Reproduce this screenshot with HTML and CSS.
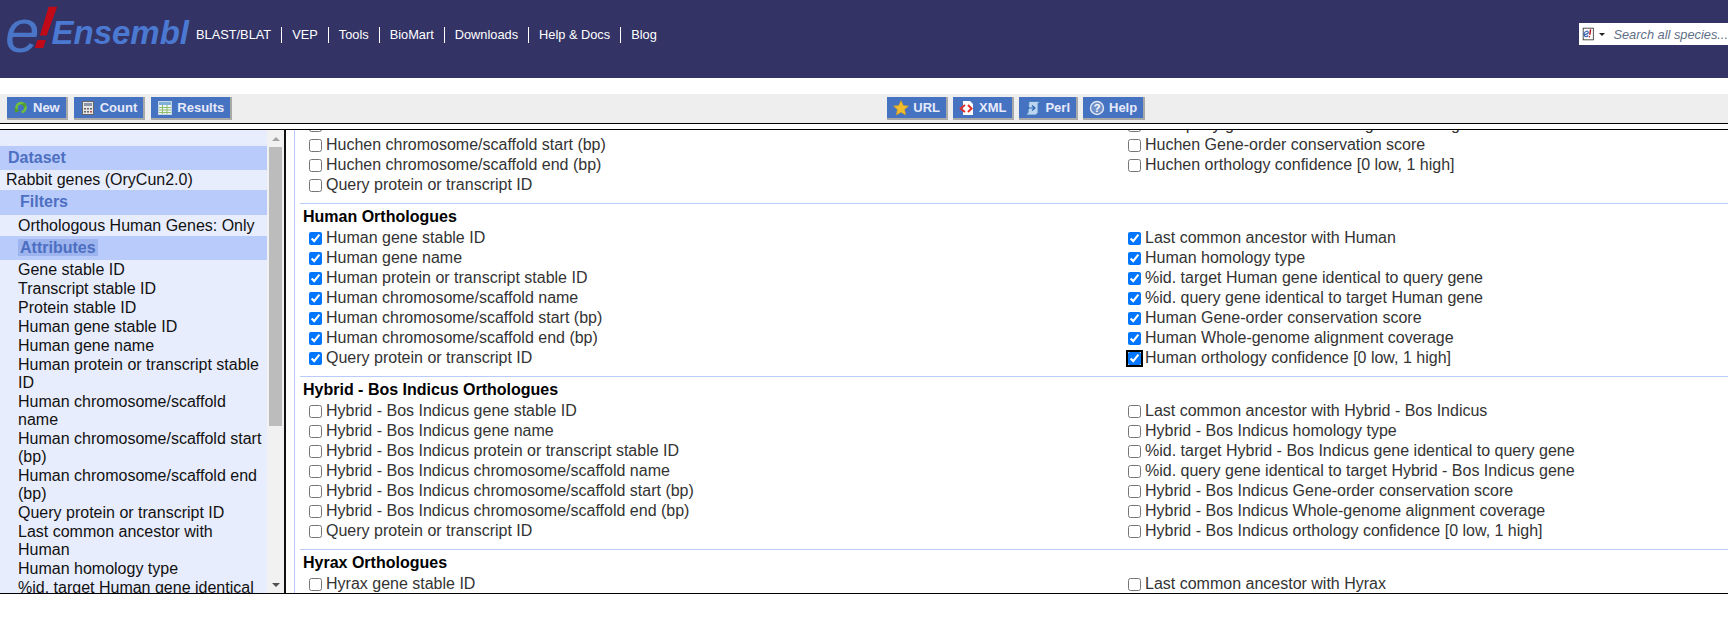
FILE: index.html
```html
<!DOCTYPE html>
<html>
  <head>
    <meta charset="utf-8">
    <title>BioMart - Ensembl</title>
    <link rel="stylesheet" href="styles.css">
  </head>
  <body>
    <header class="masthead">
      <div class="logo">
        <span class="logo-e">e</span><span class="logo-bang">!</span><span class="logo-name">Ensembl</span>
      </div>
      <ul class="nav">
        <li>BLAST/BLAT</li>
        <li>VEP</li>
        <li>Tools</li>
        <li>BioMart</li>
        <li>Downloads</li>
        <li>Help &amp; Docs</li>
        <li>Blog</li>
      </ul>
      <div class="site-search">
        <svg class="search-icon" width="16" height="18" viewBox="0 0 16 18">
          <rect x="1.500" y="1.500" width="13" height="15" fill="#fff" stroke="#222"/>
          <path d="M2 10c1-5 6-6 6-3 0 2-3 2.500-5 3 0 3 3 3 5 1" fill="none" stroke="#3a66b8" stroke-width="1.600"/>
          <path d="M11 3l-1 7" stroke="#b01020" stroke-width="1.800"/>
          <circle cx="9.500" cy="12.500" r="1" fill="#b01020"/>
        </svg>
        <span class="search-caret"></span>
        <span class="search-text">Search all species...</span>
      </div>
    </header>

    <div class="toolbar">
      <div class="tool-group">
        <button class="tool-btn">
          <svg width="16" height="16" viewBox="0 0 16 16">
            <path d="M12 6.500a4.500 4.500 0 1 1-4.500-2.500" fill="none" stroke="#6fbf3c" stroke-width="2.600" transform="rotate(180 8 8)"/>
            <path d="M2 7l4 4.500-5 .5z" fill="#4f9e2a" transform="rotate(-20 4 9)"/>
            <path d="M12 8l-4-4 5-1z" fill="#4f9e2a"/>
          </svg>
          New
        </button>
        <button class="tool-btn">
          <svg width="16" height="16" viewBox="0 0 16 16">
            <rect x="2.500" y="1.500" width="11" height="13" fill="#e6e6e6" stroke="#666"/>
            <rect x="4" y="3" width="8" height="3" fill="#8b97a8"/>
            <path d="M4 8h2v1.500H4zM7 8h2v1.500H7zM10 8h2v1.500h-2zM4 11h2v1.500H4zM7 11h2v1.500H7z" fill="#666"/>
            <path d="M10 11h2v1.500h-2z" fill="#c84a3a"/>
          </svg>
          Count
        </button>
        <button class="tool-btn">
          <svg width="16" height="16" viewBox="0 0 16 16">
            <rect x="1.500" y="1.500" width="13" height="13" fill="#eef4fb" stroke="#c4d4e6"/>
            <rect x="2" y="2" width="12" height="3" fill="#7fb0d8"/>
            <path d="M2 7.500h12M2 10h12M2 12.500h12M5.500 5v9M10 5v9" stroke="#8fbf6a" stroke-width="1"/>
          </svg>
          Results
        </button>
      </div>
      <div class="tool-group tool-group-export">
        <button class="tool-btn">
          <svg width="16" height="16" viewBox="0 0 16 16">
            <path d="M8 .5l2.300 5 5.200.6-3.900 3.500 1.100 5.400L8 12.300 3.300 15l1.100-5.400L.5 6.100l5.200-.6z" fill="#f2bd2c" stroke="#c99a22" stroke-width=".6"/>
          </svg>
          URL
        </button>
        <button class="tool-btn">
          <svg width="16" height="16" viewBox="0 0 16 16">
            <path d="M4 1h7l3 3v11H4z" fill="#fff"/>
            <path d="M6 5L1.500 8.500 6 12" fill="none" stroke="#e0322a" stroke-width="2"/>
            <path d="M9 5l3.500 3.500L9 12" fill="none" stroke="#e0322a" stroke-width="2"/>
          </svg>
          XML
        </button>
        <button class="tool-btn">
          <svg width="16" height="16" viewBox="0 0 16 16">
            <path d="M4 1.500h11l-2 2v9l-2 2.500H1l2-2.500z" fill="#bcd6f2" stroke="#3f78b8" stroke-width=".8"/>
            <path d="M2 8h8M7 5.500L10 8l-3 2.500" fill="none" stroke="#2a66ae" stroke-width="1.200"/>
          </svg>
          Perl
        </button>
        <button class="tool-btn">
          <svg width="16" height="16" viewBox="0 0 16 16">
            <circle cx="8" cy="8" r="6.500" fill="#6f8fc8" stroke="#dfe6f5" stroke-width="1.400"/>
            <text x="8" y="12" text-anchor="middle" class="help-mark">?</text>
          </svg>
          Help
        </button>
      </div>
    </div>

    <div class="panes">
      <aside class="summary">
        <div class="summary-list">
          <h3 class="band band-top">Dataset</h3>
          <div class="summary-dataset">Rabbit genes (OryCun2.0)</div>
          <h3 class="band band-sub band-filters">Filters</h3>
          <div class="summary-item summary-filter">Orthologous Human Genes: Only</div>
          <h3 class="band band-sub"><span class="band-active">Attributes</span></h3>
          <div class="summary-items">
            <div class="summary-item">Gene stable ID</div>
            <div class="summary-item">Transcript stable ID</div>
            <div class="summary-item">Protein stable ID</div>
            <div class="summary-item">Human gene stable ID</div>
            <div class="summary-item">Human gene name</div>
            <div class="summary-item">Human protein or transcript stable ID</div>
            <div class="summary-item">Human chromosome/scaffold name</div>
            <div class="summary-item">Human chromosome/scaffold start (bp)</div>
            <div class="summary-item">Human chromosome/scaffold end (bp)</div>
            <div class="summary-item">Query protein or transcript ID</div>
            <div class="summary-item">Last common ancestor with Human</div>
            <div class="summary-item">Human homology type</div>
            <div class="summary-item">%id. target Human gene identical to query gene</div>
          </div>
        </div>
        <div class="scrollbar">
          <div class="scroll-btn"><span class="arrow-up"></span></div>
          <div class="scroll-thumb"></div>
          <div class="scroll-rest"></div>
          <div class="scroll-btn"><span class="arrow-down"></span></div>
        </div>
      </aside>

      <main class="attributes">
        <section class="attr-section attr-section-first">
          <div class="attr-grid">
            <label class="attr"><input type="checkbox">Huchen chromosome/scaffold name</label>
            <label class="attr"><input type="checkbox">%id. query gene identical to target Huchen gene</label>
            <label class="attr"><input type="checkbox">Huchen chromosome/scaffold start (bp)</label>
            <label class="attr"><input type="checkbox">Huchen Gene-order conservation score</label>
            <label class="attr"><input type="checkbox">Huchen chromosome/scaffold end (bp)</label>
            <label class="attr"><input type="checkbox">Huchen orthology confidence [0 low, 1 high]</label>
            <label class="attr"><input type="checkbox">Query protein or transcript ID</label>
          </div>
        </section>

        <section class="attr-section">
          <h4 class="attr-title">Human Orthologues</h4>
          <div class="attr-grid">
            <label class="attr"><input type="checkbox" checked>Human gene stable ID</label>
            <label class="attr"><input type="checkbox" checked>Last common ancestor with Human</label>
            <label class="attr"><input type="checkbox" checked>Human gene name</label>
            <label class="attr"><input type="checkbox" checked>Human homology type</label>
            <label class="attr"><input type="checkbox" checked>Human protein or transcript stable ID</label>
            <label class="attr"><input type="checkbox" checked>%id. target Human gene identical to query gene</label>
            <label class="attr"><input type="checkbox" checked>Human chromosome/scaffold name</label>
            <label class="attr"><input type="checkbox" checked>%id. query gene identical to target Human gene</label>
            <label class="attr"><input type="checkbox" checked>Human chromosome/scaffold start (bp)</label>
            <label class="attr"><input type="checkbox" checked>Human Gene-order conservation score</label>
            <label class="attr"><input type="checkbox" checked>Human chromosome/scaffold end (bp)</label>
            <label class="attr"><input type="checkbox" checked>Human Whole-genome alignment coverage</label>
            <label class="attr"><input type="checkbox" checked>Query protein or transcript ID</label>
            <label class="attr"><input class="is-focused" type="checkbox" checked>Human orthology confidence [0 low, 1 high]</label>
          </div>
        </section>

        <section class="attr-section">
          <h4 class="attr-title">Hybrid - Bos Indicus Orthologues</h4>
          <div class="attr-grid">
            <label class="attr"><input type="checkbox">Hybrid - Bos Indicus gene stable ID</label>
            <label class="attr"><input type="checkbox">Last common ancestor with Hybrid - Bos Indicus</label>
            <label class="attr"><input type="checkbox">Hybrid - Bos Indicus gene name</label>
            <label class="attr"><input type="checkbox">Hybrid - Bos Indicus homology type</label>
            <label class="attr"><input type="checkbox">Hybrid - Bos Indicus protein or transcript stable ID</label>
            <label class="attr"><input type="checkbox">%id. target Hybrid - Bos Indicus gene identical to query gene</label>
            <label class="attr"><input type="checkbox">Hybrid - Bos Indicus chromosome/scaffold name</label>
            <label class="attr"><input type="checkbox">%id. query gene identical to target Hybrid - Bos Indicus gene</label>
            <label class="attr"><input type="checkbox">Hybrid - Bos Indicus chromosome/scaffold start (bp)</label>
            <label class="attr"><input type="checkbox">Hybrid - Bos Indicus Gene-order conservation score</label>
            <label class="attr"><input type="checkbox">Hybrid - Bos Indicus chromosome/scaffold end (bp)</label>
            <label class="attr"><input type="checkbox">Hybrid - Bos Indicus Whole-genome alignment coverage</label>
            <label class="attr"><input type="checkbox">Query protein or transcript ID</label>
            <label class="attr"><input type="checkbox">Hybrid - Bos Indicus orthology confidence [0 low, 1 high]</label>
          </div>
        </section>

        <section class="attr-section">
          <h4 class="attr-title">Hyrax Orthologues</h4>
          <div class="attr-grid">
            <label class="attr"><input type="checkbox">Hyrax gene stable ID</label>
            <label class="attr"><input type="checkbox">Last common ancestor with Hyrax</label>
          </div>
        </section>
      </main>
    </div>
  </body>
</html>
```

FILE: styles.css
```css
* {
  box-sizing: border-box;
}
html, body {
  margin: 0;
  height: 100%;
}
body {
  font-family: "Liberation Sans", Arial, sans-serif;
  font-size: 16px;
  background: #fff;
  overflow: hidden;
}

/* top bar */
.masthead {
  display: flex;
  height: 78px;
  background: #333366;
}
.logo {
  display: flex;
  width: 186px;
  padding-left: 5px;
  flex-shrink: 0;
  line-height: 1;
}
.logo-e {
  font-size: 62px;
  font-style: italic;
  color: #4a74c6;
}
.logo-bang {
  margin: -2px 0 0 -5px;
  font-size: 60px;
  font-style: italic;
  font-weight: bold;
  color: #c00a18;
  transform: skewX(-8deg);
}
.logo-name {
  margin: 16px 0 0 -3px;
  font-size: 33px;
  font-style: italic;
  font-weight: bold;
  color: #4b79d2;
}
.nav {
  display: flex;
  align-items: flex-start;
  list-style: none;
  margin: 27px 0 0;
  padding: 0;
  color: #fff;
  font-size: 12.8px;
  line-height: 16px;
}
.nav li {
  padding: 0 10px;
  border-right: 1px solid #fff;
}
.nav li:last-child {
  border-right: 0;
}
.site-search {
  display: flex;
  align-items: center;
  margin: 23px 0 0 auto;
  width: 149px;
  height: 22px;
  padding-left: 3px;
  background: #fff;
  overflow: hidden;
  white-space: nowrap;
}
.search-caret {
  width: 0;
  height: 0;
  margin: 0 8px 0 5px;
  border: 3px solid transparent;
  border-top: 3px solid #222;
  border-bottom: 0;
}
.search-text {
  font-size: 12.8px;
  font-style: italic;
  color: #5f6f88;
}

/* action buttons */
.toolbar {
  display: flex;
  height: 30px;
  margin-top: 16px;
  padding: 3px 0 0 7px;
  background: #eeeeee;
  border-bottom: 1px solid #000;
}
.tool-group {
  display: flex;
  gap: 6px;
}
.tool-group-export {
  gap: 5px;
  margin-left: 655px;
}
.tool-btn {
  display: flex;
  align-items: center;
  gap: 4px;
  height: 23px;
  padding: 0 6px;
  font-family: inherit;
  font-size: 13px;
  font-weight: bold;
  color: #e6eafb;
  background: #4672c2;
  border: 0;
  border-right: 2px solid #a9a9a9;
  border-bottom: 2px solid #a9a9a9;
}
.help-mark {
  font-size: 11px;
  font-weight: bold;
  fill: #fff;
}

/* panes below the toolbar */
.panes {
  display: flex;
  height: 465px;
  margin-top: 5px;
  border-top: 1px solid #000;
  border-bottom: 1px solid #000;
}
.summary {
  display: flex;
  width: 286px;
  flex-shrink: 0;
  background: #e8edfd;
  border-right: 2px solid #111;
}
.summary-list {
  flex: 1;
  padding-top: 16px;
  overflow: hidden;
  color: #111;
  line-height: 18px;
}
.band {
  margin: 0;
  height: 24px;
  padding-left: 8px;
  font-size: 16px;
  line-height: 24px;
  color: #4d6fc2;
  background: #b9cbfb;
}
.band-sub {
  padding-left: 20px;
}
.band-filters {
  height: 25px;
}
.band-active {
  display: inline-block;
  margin-left: -2px;
  padding: 0 2px;
  background: #9db4ee;
  line-height: 17px;
}
.summary-dataset {
  padding: 1px 0 1px 6px;
}
.summary-item {
  padding: 0 0 1px 18px;
}
.summary-filter {
  padding: 2px 0 1px 18px;
}
.summary-items {
  padding-top: 1px;
}
.scrollbar {
  display: flex;
  flex-direction: column;
  align-items: center;
  width: 17px;
  background: #f1f1f1;
}
.scroll-btn {
  display: flex;
  align-items: center;
  justify-content: center;
  width: 100%;
  height: 17px;
  flex-shrink: 0;
}
.arrow-up, .arrow-down {
  width: 0;
  height: 0;
  border-left: 4px solid transparent;
  border-right: 4px solid transparent;
}
.arrow-up {
  border-bottom: 4px solid #a3a3a3;
}
.arrow-down {
  border-top: 4px solid #505050;
}
.scroll-thumb {
  width: 13px;
  height: 279px;
  background: #bcbcbc;
}
.scroll-rest {
  flex: 1;
}

.attributes {
  flex: 1;
  margin-left: 8px;
  padding-left: 5px;
  overflow: hidden;
  color: #333;
  background: #fff;
  border-left: 1px solid #b9cbfb;
}
.attr-section {
  padding-bottom: 8px;
  border-top: 1px solid #b9cbfb;
}
.attr-section-first {
  margin-top: -15px;
  border-top: 0;
}
.attr-title {
  margin: 0;
  height: 24px;
  padding: 1px 0 0 3px;
  font-size: 16px;
  line-height: 24px;
  color: #000;
}
.attr-grid {
  display: grid;
  grid-template-columns: 819px 1fr;
  padding-left: 9px;
}
.attr {
  display: flex;
  align-items: center;
  gap: 4px;
  height: 20px;
  white-space: nowrap;
}
.attr input {
  width: 13px;
  height: 13px;
  margin: 0;
  flex-shrink: 0;
}
.attr input.is-focused {
  outline: 2px solid #000;
  outline-offset: 0;
  border-radius: 2px;
}
```
